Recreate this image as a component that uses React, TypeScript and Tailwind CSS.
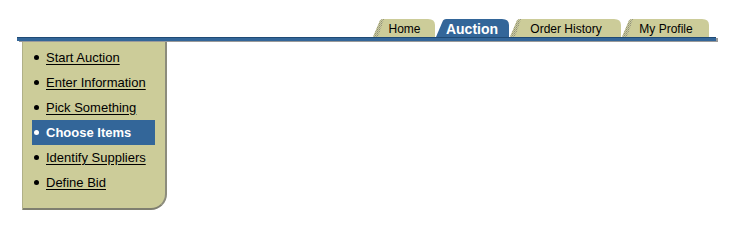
import React from 'react';

const tabs = [
  { label: 'Home', width: 63, active: false },
  { label: 'Auction', width: 74, active: true },
  { label: 'Order History', width: 112, active: false },
  { label: 'My Profile', width: 88, active: false },
];

const steps = [
  { label: 'Start Auction', current: false },
  { label: 'Enter Information', current: false },
  { label: 'Pick Something', current: false },
  { label: 'Choose Items', current: true },
  { label: 'Identify Suppliers', current: false },
  { label: 'Define Bid', current: false },
];

function TabShape({ width, active }: { width: number; active: boolean }) {
  const h = 18;
  const fill = active ? '#336699' : '#cccc99';
  const d = `M0,${h} L7,1.5 Q8,0 10,0 L${width - 8},0 Q${width - 1},0 ${width - 1},6 L${width - 1},${h} Z`;
  return (
    <svg className="absolute inset-0" width={width} height={h} viewBox={`0 0 ${width} ${h}`}>
      <defs>
        <pattern id="dither" width="2" height="2" patternUnits="userSpaceOnUse">
          <rect width="2" height="2" fill="#cccc99" />
          <rect width="1" height="1" fill="#8f8f7a" />
          <rect x="1" y="1" width="1" height="1" fill="#a8a890" />
        </pattern>
      </defs>
      <path d={d} fill={fill} />
      {!active && <path d={`M0,${h} L7,1.5 Q8,0 10,0 L11,0 L5,${h} Z`} fill="url(#dither)" />}
    </svg>
  );
}

export default function App() {
  return (
    <div className="w-[735px] h-[228px] bg-white font-['Liberation_Sans',Arial,sans-serif]">
      {/* Tabs */}
      <div className="flex justify-end pt-[19px] pr-[25px]">
        {tabs.map((tab) => (
          <div
            key={tab.label}
            className="relative h-[18px] flex items-center justify-center pt-[1px]"
            style={{ width: tab.width }}
          >
            <TabShape width={tab.width} active={tab.active} />
            <span
              className={
                tab.active
                  ? 'relative -ml-[2px] text-[14px] font-bold text-white leading-none'
                  : 'relative text-[12px] text-black leading-none'
              }
            >
              {tab.label}
            </span>
          </div>
        ))}
      </div>

      {/* Blue rule */}
      <div className="ml-[17px] w-[699px] h-[4px] bg-[#336699] border-t border-[#1f4a75] shadow-[2px_1px_0_#9a9a9a]" />

      {/* Side navigation */}
      <div className="ml-[22px] mt-[1px] w-[145px] bg-[#cccc99] border-l border-r-2 border-b-2 border-l-[#b0b088] border-r-[#8c8c7c] border-b-[#7f7f70] rounded-br-[16px] pt-[3px] pb-[13px] pl-[9px]">
        {steps.map((step) => (
          <div
            key={step.label}
            className={
              step.current
                ? 'flex items-center h-[25px] w-[123px] bg-[#336699] text-white font-bold text-[13px]'
                : 'flex items-center h-[25px] w-[123px] text-black text-[13px]'
            }
          >
            <span
              className={
                step.current
                  ? 'ml-[2px] w-[5px] h-[5px] rounded-full bg-white'
                  : 'ml-[2px] w-[5px] h-[5px] rounded-full bg-black'
              }
            />
            <span className={step.current ? 'ml-[7px]' : 'ml-[7px] underline underline-offset-[2px]'}>
              {step.label}
            </span>
          </div>
        ))}
      </div>
    </div>
  );
}
